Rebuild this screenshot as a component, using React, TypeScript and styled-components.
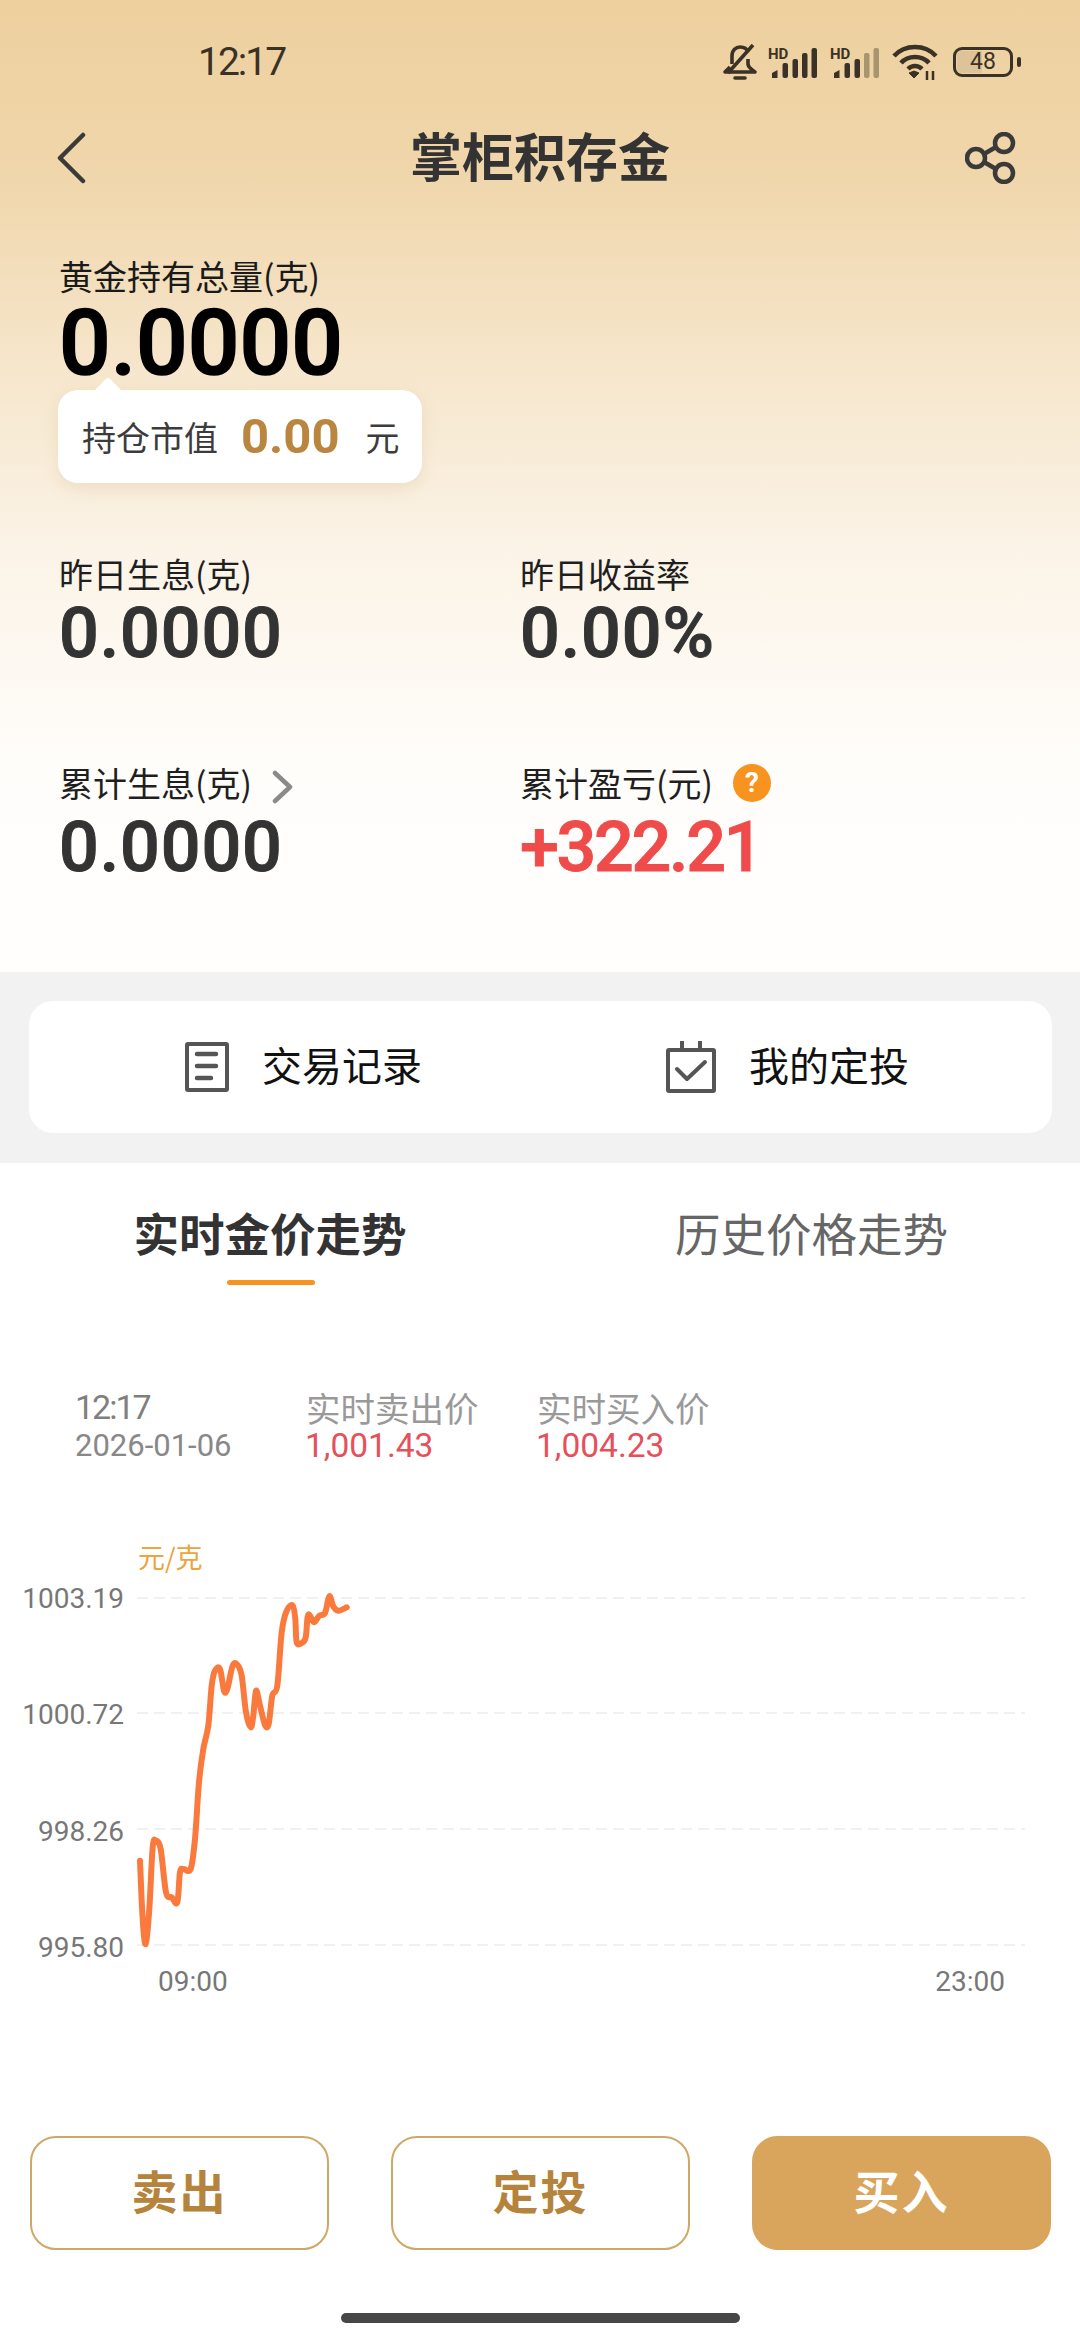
import React from 'react';
import styled, { createGlobalStyle } from 'styled-components';

const GlobalStyle = createGlobalStyle`
    html, body {
        margin: 0;
        padding: 0;
        background: #ffffff;
    }
    * {
        box-sizing: border-box;
    }
`;

const CJK = `"Noto Sans CJK SC", "Noto Sans", sans-serif`;
const NUM = `Roboto, "Noto Sans CJK SC", sans-serif`;

// traced from the price curve, page coordinates
const CURVE: [number, number][] = [
    [420, 1025], [428, 1200], [437, 1275], [448, 1170], [458, 985], [468, 965], [482, 990], [498, 1120],
    [515, 1135], [532, 1150], [540, 1060], [550, 1050], [572, 1050], [585, 960], [597, 790], [610, 690],
    [625, 620], [635, 500], [645, 455], [660, 450], [672, 515], [682, 510], [698, 440], [712, 437],
    [725, 470], [738, 580], [752, 625], [760, 590], [768, 515], [780, 560], [795, 618], [806, 615],
    [817, 530], [832, 500], [845, 340], [860, 275], [878, 260], [886, 300], [890, 370], [905, 372],
    [917, 355], [923, 292], [930, 290], [942, 310], [958, 290], [975, 282], [988, 232], [1000, 262],
    [1015, 275], [1040, 265],
];

const curvePath = () => {
    const pts = CURVE.map(([x, y]) => [x / 3, 1520 + y / 3]);
    let d = `M${pts[0][0]} ${pts[0][1]}`;
    for (let i = 0; i < pts.length - 1; i++) {
        const p0 = pts[Math.max(i - 1, 0)];
        const p1 = pts[i];
        const p2 = pts[i + 1];
        const p3 = pts[Math.min(i + 2, pts.length - 1)];
        const c1x = p1[0] + (p2[0] - p0[0]) / 6;
        const c1y = p1[1] + (p2[1] - p0[1]) / 6;
        const c2x = p2[0] - (p3[0] - p1[0]) / 6;
        const c2y = p2[1] - (p3[1] - p1[1]) / 6;
        d += ` C${c1x.toFixed(1)} ${c1y.toFixed(1)} ${c2x.toFixed(1)} ${c2y.toFixed(1)} ${p2[0].toFixed(1)} ${p2[1].toFixed(1)}`;
    }
    return d;
};

const Signal: React.FC<{ dim?: boolean }> = ({ dim }) => (
    <svg width="50" height="34" viewBox="0 -2 50 34">
        <text x="0" y="12" fontFamily="Roboto, sans-serif" fontWeight="700" fontSize="15" fill="#3a3226">HD</text>
        <path d="M4 31 V26 L9.5 23 V31 Z" fill="#3a3226" />
        <rect x="14.5" y="16" width="5.5" height="15" rx="2" fill="#3a3226" />
        <rect x="24.5" y="12" width="5.5" height="19" rx="2" fill="#3a3226" />
        <rect x="34" y="6" width="5.5" height="25" rx="2" fill={dim ? '#a8946f' : '#3a3226'} />
        <rect x="43.5" y="1" width="5.5" height="30" rx="2" fill={dim ? '#a8946f' : '#3a3226'} />
    </svg>
);

const App: React.FC = () => {
    return (
        <Page>
            <GlobalStyle />
            <Hero>
                <StatusBar>
                    <Clock>12:17</Clock>
                    <StatusIcons>
                        <svg width="36" height="36" viewBox="0 0 36 36" fill="none" stroke="#3a3226" strokeWidth="3.6" strokeLinejoin="round">
                            <path d="M10 20 V12 C10 6 14 3 18 3 C22 3 25 5 26 8" />
                            <path d="M26 15 V20 C26 24 30 25 33 28 H3 L8 23" />
                            <path d="M6 29 L31 1" />
                            <path d="M13 34 H23" strokeLinecap="round" />
                        </svg>
                        <Signal />
                        <Signal dim />
                        <svg width="46" height="36" viewBox="0 0 46 36" fill="none" stroke="#3a3226" strokeWidth="4.5">
                            <path d="M2 12 C13 0 33 0 44 12" />
                            <path d="M9 19 C16 11 30 11 37 19" />
                            <path d="M16 25 C20 21 26 21 30 25" />
                            <path d="M17 29 L22 34 L27 29 L22 27 Z" fill="#3a3226" strokeWidth="1" />
                            <path d="M35 36 V27 M41 36 V27" strokeWidth="2.5" />
                        </svg>
                        <Battery>
                            <BatteryBody>48</BatteryBody>
                            <BatteryCap />
                        </Battery>
                    </StatusIcons>
                </StatusBar>
                <Header>
                    <BackIcon viewBox="0 0 30 52" fill="none" stroke="#3a3a3a" strokeWidth="4.5" strokeLinecap="round" strokeLinejoin="round">
                        <path d="M27 3 L4 26 L27 49" />
                    </BackIcon>
                    <Title>掌柜积存金</Title>
                    <ShareIcon viewBox="0 0 52 52" fill="none" stroke="#3a3a3a" strokeWidth="4.5">
                        <circle cx="39" cy="11" r="9" />
                        <circle cx="11" cy="26" r="9" />
                        <circle cx="39" cy="41" r="9" />
                        <path d="M19 22 L31 15 M19 30 L31 37" />
                    </ShareIcon>
                </Header>
                <Holdings>
                    <HoldLabel>黄金持有总量(克)</HoldLabel>
                    <HoldValue>0.0000</HoldValue>
                    <ValueCard>
                        <CardLabel>持仓市值</CardLabel>
                        <CardAmount>0.00</CardAmount>
                        <CardLabel>元</CardLabel>
                    </ValueCard>
                </Holdings>
                <Stats>
                    <Stat>
                        <StatLabel>昨日生息(克)</StatLabel>
                        <StatValue>0.0000</StatValue>
                    </Stat>
                    <Stat>
                        <StatLabel>昨日收益率</StatLabel>
                        <StatValue>0.00%</StatValue>
                    </Stat>
                    <Stat $lower>
                        <StatLabel>
                            累计生息(克)
                            <ChevronIcon viewBox="0 0 22 34" fill="none" stroke="#8a8a8a" strokeWidth="4.5" strokeLinecap="round" strokeLinejoin="round">
                                <path d="M3 3 L18 17 L3 31" />
                            </ChevronIcon>
                        </StatLabel>
                        <StatValue>0.0000</StatValue>
                    </Stat>
                    <Stat $lower>
                        <StatLabel>
                            累计盈亏(元)
                            <HelpDot>?</HelpDot>
                        </StatLabel>
                        <StatValue $red>+322.21</StatValue>
                    </Stat>
                </Stats>
            </Hero>

            <ShortcutBand>
                <ShortcutCard>
                    <Shortcut>
                        <svg width="44" height="50" viewBox="0 0 44 50" fill="none" stroke="#555555" strokeWidth="4" strokeLinejoin="round">
                            <rect x="2" y="2" width="40" height="46" rx="1" />
                            <path d="M12 12 H31 M12 24 H31 M12 36 H26" strokeWidth="4.5" strokeLinecap="round" />
                        </svg>
                        <ShortcutText>交易记录</ShortcutText>
                    </Shortcut>
                    <Shortcut>
                        <svg width="50" height="52" viewBox="0 0 50 52" fill="none" stroke="#555555" strokeWidth="4" strokeLinejoin="round">
                            <rect x="2" y="9" width="46" height="41" rx="1" />
                            <path d="M16 1 V8 M34 1 V8" strokeLinecap="round" />
                            <path d="M11 28 L21 38 L39 21" strokeLinecap="round" />
                        </svg>
                        <ShortcutText>我的定投</ShortcutText>
                    </Shortcut>
                </ShortcutCard>
            </ShortcutBand>

            <Tabs>
                <Tab $active>实时金价走势</Tab>
                <Tab>历史价格走势</Tab>
            </Tabs>

            <Quote>
                <QuoteCol>
                    <QuoteTime>12:17</QuoteTime>
                    <QuoteDate>2026-01-06</QuoteDate>
                </QuoteCol>
                <QuoteCol>
                    <QuoteHead>实时卖出价</QuoteHead>
                    <QuotePrice>1,001.43</QuotePrice>
                </QuoteCol>
                <QuoteCol>
                    <QuoteHead>实时买入价</QuoteHead>
                    <QuotePrice>1,004.23</QuotePrice>
                </QuoteCol>
            </Quote>

            <Unit>元/克</Unit>
            <Chart>
                <YAxis>
                    <span>1003.19</span>
                    <span>1000.72</span>
                    <span>998.26</span>
                    <span>995.80</span>
                </YAxis>
                <Plot width="958" height="381" viewBox="122 1581 958 381" fill="none">
                    {[1599, 1714, 1830, 1946].map((y) => (
                        <path key={y} d={`M137 ${y} H1025`} stroke="#f1f1f1" strokeWidth="2" strokeDasharray="11 6" />
                    ))}
                    <path d={curvePath()} stroke="#fa7a3e" strokeWidth="6" strokeLinecap="round" strokeLinejoin="round" />
                </Plot>
            </Chart>
            <XAxis>
                <span>09:00</span>
                <span>23:00</span>
            </XAxis>

            <Actions>
                <ActionButton>卖出</ActionButton>
                <ActionButton>定投</ActionButton>
                <ActionButton $solid>买入</ActionButton>
            </Actions>
            <HomeBar />
        </Page>
    );
};

const Page = styled.div`
    width: 1080px;
    height: 2340px;
    overflow: hidden;
    background: #ffffff;
    font-family: ${CJK};
    color: #111111;
`;

const Hero = styled.div`
    height: 972px;
    background: linear-gradient(180deg, #eed09e 0%, #f0d6ab 18%, #f6e6cc 38%, #fbf3e6 56%, #fffdfa 78%, #fffefd 100%);
`;

const StatusBar = styled.div`
    height: 124px;
    display: flex;
    align-items: center;
    padding: 0 59px 0 198px;
`;

const Clock = styled.div`
    font-family: ${NUM};
    font-size: 39px;
    letter-spacing: -2px;
    color: #3a3226;
`;

const StatusIcons = styled.div`
    margin-left: auto;
    display: flex;
    align-items: center;
    gap: 12px;

    & > svg:first-child {
        margin-right: -2px;
    }
`;

const Battery = styled.div`
    display: flex;
    align-items: center;
    margin-left: 3px;
`;

const BatteryBody = styled.div`
    width: 60px;
    height: 30px;
    border: 3px solid #3a3226;
    border-radius: 9px;
    background: linear-gradient(90deg, #dcc39a 48%, transparent 48%);
    background-clip: content-box;
    padding: 1px;
    font-family: ${NUM};
    font-size: 23px;
    line-height: 22px;
    text-align: center;
    color: #3a3226;
`;

const BatteryCap = styled.div`
    width: 4px;
    height: 10px;
    margin-left: 4px;
    border-radius: 2px;
    background: #3a3226;
`;

const Header = styled.div`
    height: 68px;
    display: grid;
    grid-template-columns: 1fr auto 1fr;
    align-items: center;
    padding: 0 60px;
`;

const BackIcon = styled.svg`
    width: 30px;
    height: 52px;
    margin-left: -4px;
`;

const ShareIcon = styled.svg`
    width: 52px;
    height: 52px;
    margin-right: 3px;
    justify-self: end;
`;

const Title = styled.div`
    font-size: 52px;
    font-weight: 700;
    color: #333333;
    line-height: 62px;
    padding-bottom: 6px;
`;

const Holdings = styled.div`
    padding: 64px 0 0 59px;
`;

const HoldLabel = styled.div`
    font-size: 34px;
    line-height: 40px;
    color: #1a1a1a;
`;

const HoldValue = styled.div`
    font-family: ${NUM};
    font-size: 91px;
    font-weight: 500;
    line-height: 90px;
    margin-top: 2px;
    color: #000000;
    -webkit-text-stroke: 1.5px #000000;
`;

const ValueCard = styled.div`
    position: relative;
    width: 364px;
    height: 93px;
    margin: 2px 0 0 -1px;
    display: flex;
    align-items: center;
    padding-left: 24px;
    gap: 23px;
    background: #ffffff;
    border-radius: 20px;
    box-shadow: 0 6px 16px rgba(190, 150, 90, 0.18);

    &::before {
        content: '';
        position: absolute;
        left: 40px;
        top: -9px;
        width: 20px;
        height: 20px;
        background: #ffffff;
        transform: rotate(45deg);
        border-radius: 3px;
    }
`;

const CardLabel = styled.span`
    font-size: 34px;
    color: #3c3c3c;
`;

const CardAmount = styled.span`
    font-family: ${NUM};
    font-size: 49px;
    font-weight: 700;
    margin-right: 3px;
    color: #b9853f;
`;

const Stats = styled.div`
    display: grid;
    grid-template-columns: 461px 460px;
    padding: 71px 0 0 59px;
    row-gap: 93px;
`;

const Stat = styled.div<{ $lower?: boolean }>`
    display: flex;
    flex-direction: column;
    gap: ${(p) => (p.$lower ? '6px' : '1px')};
    margin-bottom: ${(p) => (p.$lower ? '0' : '-1px')};
`;

const StatLabel = styled.div`
    display: flex;
    align-items: center;
    height: 40px;
    font-size: 34px;
    line-height: 40px;
    color: #1f1f1f;
`;

const ChevronIcon = styled.svg`
    width: 22px;
    height: 34px;
    margin: 8px 0 0 20px;
`;

const StatValue = styled.div<{ $red?: boolean }>`
    font-family: ${NUM};
    font-size: 70px;
    font-weight: 500;
    line-height: 76px;
    letter-spacing: ${(p) => (p.$red ? '-2.3px' : '0.9px')};
    color: ${(p) => (p.$red ? '#f04b4b' : '#333333')};
    -webkit-text-stroke: 1px ${(p) => (p.$red ? '#f04b4b' : '#333333')};
`;

const HelpDot = styled.span`
    width: 38px;
    height: 38px;
    margin-left: 20px;
    border-radius: 50%;
    background: #f7931e;
    color: #ffffff;
    font-family: ${NUM};
    font-size: 28px;
    font-weight: 700;
    line-height: 38px;
    text-align: center;
`;

const ShortcutBand = styled.div`
    height: 191px;
    padding: 29px 28px 0 29px;
    background: #f2f2f2;
`;

const ShortcutCard = styled.div`
    height: 132px;
    display: flex;
    align-items: center;
    justify-content: center;
    gap: 244px;
    padding-left: 13px;
    background: #ffffff;
    border-radius: 24px;
`;

const Shortcut = styled.div`
    display: flex;
    align-items: center;
    gap: 33px;
    font-size: 40px;
    color: #111111;
`;

const ShortcutText = styled.span`
    padding-bottom: 6px;
`;

const Tabs = styled.div`
    display: grid;
    grid-template-columns: 1fr 1fr;
    padding-top: 39px;
    height: 135px;
`;

const Tab = styled.div<{ $active?: boolean }>`
    position: relative;
    text-align: center;
    font-size: 45.5px;
    line-height: 60px;
    font-weight: ${(p) => (p.$active ? 700 : 400)};
    color: ${(p) => (p.$active ? '#333333' : '#666666')};
    padding-left: ${(p) => (p.$active ? '0' : '3px')};

    ${(p) =>
        p.$active &&
        `&::after {
            content: '';
            position: absolute;
            left: 227px;
            top: 78px;
            width: 88px;
            height: 5px;
            border-radius: 3px;
            background: #f7941d;
        }`}
`;

const Quote = styled.div`
    display: flex;
    padding: 89px 0 0 75px;
    height: 241px;
`;

const QuoteCol = styled.div`
    width: 231px;
    display: flex;
    flex-direction: column;
`;

const QuoteHead = styled.div`
    font-size: 34.5px;
    line-height: 40px;
    color: #999999;
`;

const QuoteTime = styled.div`
    font-family: ${NUM};
    font-size: 34px;
    line-height: 40px;
    letter-spacing: -2px;
    color: #7f7f7f;
`;

const QuoteDate = styled.div`
    font-family: ${NUM};
    font-size: 31px;
    line-height: 38px;
    color: #888888;
`;

const QuotePrice = styled.div`
    font-family: ${NUM};
    font-size: 33.5px;
    line-height: 38px;
    margin-left: -1px;
    color: #e5505a;
`;

const Unit = styled.div`
    height: 37px;
    padding-left: 138px;
    font-size: 27px;
    line-height: 36px;
    color: #eca43c;
`;

const Chart = styled.div`
    display: flex;
    height: 381px;
    margin-top: 7px;
`;

const YAxis = styled.div`
    width: 124px;
    display: flex;
    flex-direction: column;
    justify-content: space-between;
    align-items: flex-end;
    font-family: ${NUM};
    font-size: 28px;
    line-height: 32px;
    color: #777777;
`;

const Plot = styled.svg`
    margin: -3px 0 0 -2px;
    flex-shrink: 0;
`;

const XAxis = styled.div`
    display: flex;
    justify-content: space-between;
    padding: 0 75px 0 158px;
    font-family: ${NUM};
    font-size: 28px;
    line-height: 36px;
    color: #777777;
`;

const Actions = styled.div`
    display: flex;
    justify-content: space-between;
    padding: 136px 29px 0 30px;
`;

const ActionButton = styled.div<{ $solid?: boolean }>`
    width: 299px;
    height: 114px;
    display: flex;
    align-items: center;
    justify-content: center;
    padding-bottom: 8px;
    border: 2px solid #cfa868;
    border-radius: 26px;
    background: ${(p) => (p.$solid ? '#d9a55c' : '#ffffff')};
    border-color: ${(p) => (p.$solid ? '#d9a55c' : '#cfa868')};
    color: ${(p) => (p.$solid ? '#ffffff' : '#b5833c')};
    font-size: 46px;
    font-weight: 700;
    letter-spacing: 2px;
`;

const HomeBar = styled.div`
    width: 399px;
    height: 10px;
    margin: 63px auto 0;
    border-radius: 5px;
    background: #474747;
`;

export default App;
